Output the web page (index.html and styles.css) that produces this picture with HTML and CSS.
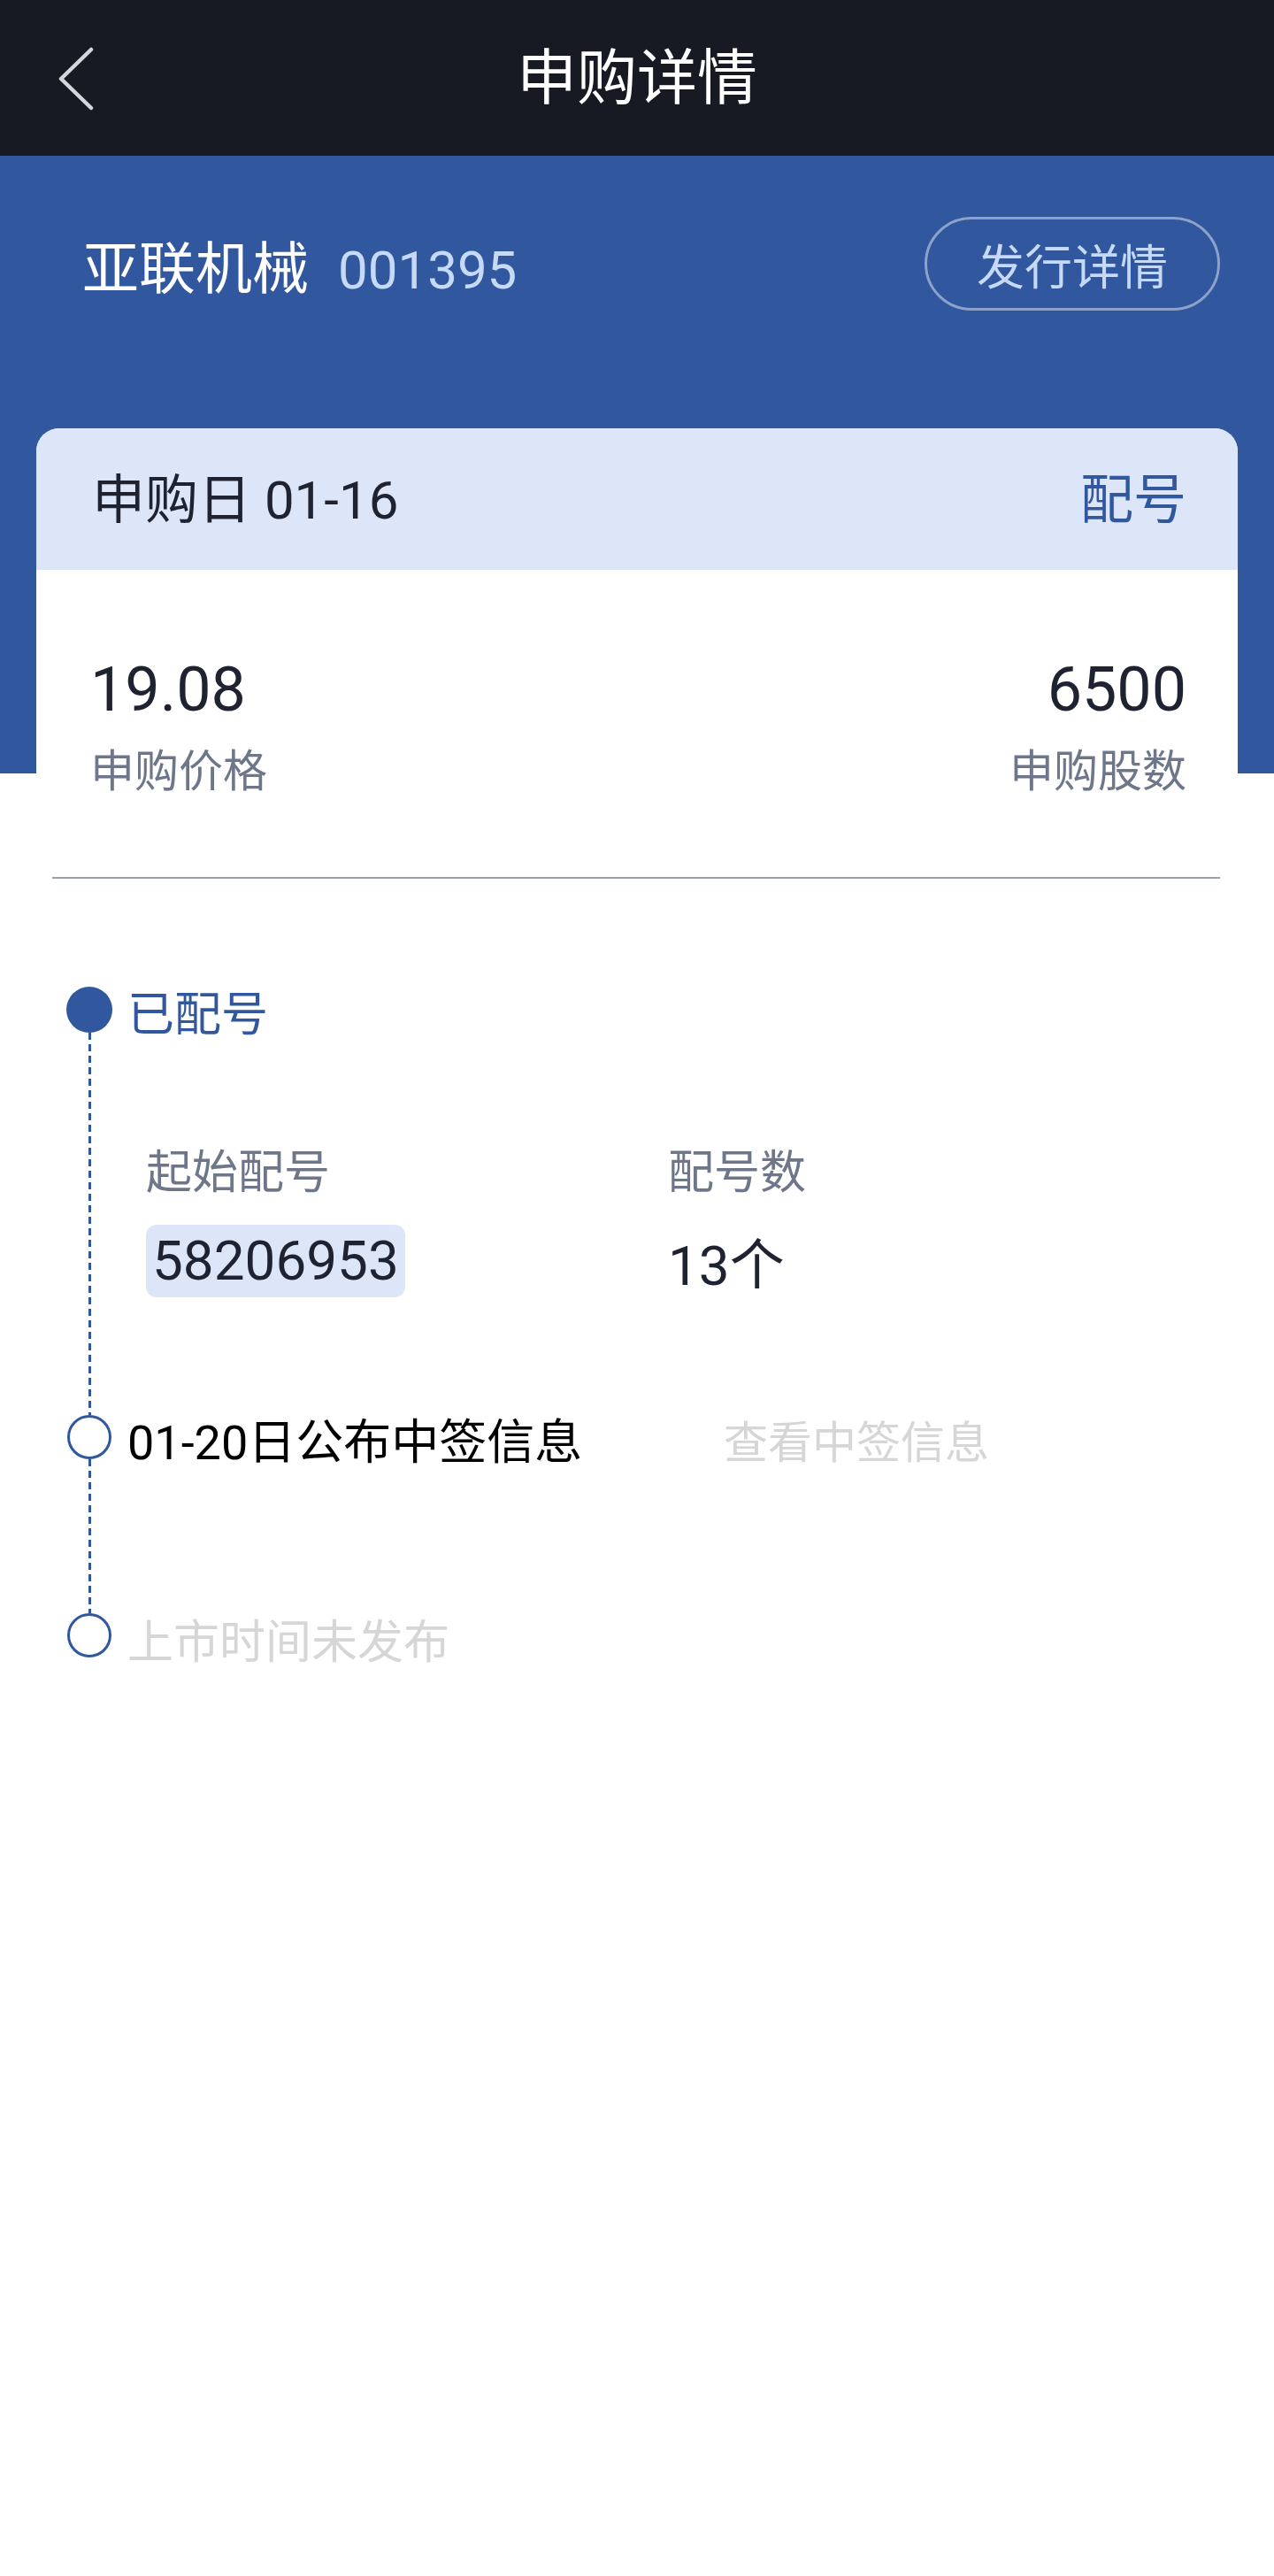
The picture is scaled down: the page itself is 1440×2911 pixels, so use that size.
FILE: index.html
```html
<!DOCTYPE html>
<html lang="zh-CN">
<head>
  <meta charset="UTF-8">
  <title>申购详情</title>
  <link rel="stylesheet" href="styles.css">
</head>
<body>

<!-- Top nav -->
<div class="nav">
  <div class="nav-back">
    <svg width="44" height="72" viewBox="0 0 44 72"><polyline points="40,3 6,36 40,69" fill="none" stroke="#d4d6dc" stroke-width="4.5" stroke-linecap="round" stroke-linejoin="round"/></svg>
  </div>
  <div class="nav-title">申购详情</div>
  <div></div>
</div>

<!-- Blue band with stock + card -->
<div class="hero">
  <div class="stock-row">
    <div class="stock">
      <span class="stock-name">亚联机械</span>
      <span class="stock-code">001395</span>
    </div>
    <button class="issue-btn">发行详情</button>
  </div>

  <div class="card">
    <div class="card-head">
      <span class="card-date">申购日 01-16</span>
      <span class="card-status">配号</span>
    </div>
    <div class="card-body">
      <div class="stat">
        <div class="stat-value">19.08</div>
        <div class="stat-label">申购价格</div>
      </div>
      <div class="stat stat-right">
        <div class="stat-value">6500</div>
        <div class="stat-label">申购股数</div>
      </div>
    </div>
  </div>
</div>

<div class="divider"></div>

<!-- Timeline -->
<div class="timeline">
  <div class="tl-item tl-first">
    <div class="tl-marker">
      <div class="dot dot-filled"></div>
      <div class="dash"></div>
    </div>
    <div class="tl-content">
      <div class="tl-title active">已配号</div>
      <div class="alloc">
        <div class="alloc-col">
          <div class="alloc-label">起始配号</div>
          <div class="alloc-value"><span class="num-box">58206953</span></div>
        </div>
        <div class="alloc-col">
          <div class="alloc-label">配号数</div>
          <div class="alloc-value">13个</div>
        </div>
      </div>
    </div>
  </div>

  <div class="tl-item tl-second">
    <div class="tl-marker">
      <div class="dot"></div>
      <div class="dash"></div>
    </div>
    <div class="tl-content tl-row">
      <div class="tl-title">01-20日公布中签信息</div>
      <div class="tl-link">查看中签信息</div>
    </div>
  </div>

  <div class="tl-item tl-last">
    <div class="tl-marker">
      <div class="dot"></div>
    </div>
    <div class="tl-content">
      <div class="tl-title muted">上市时间未发布</div>
    </div>
  </div>
</div>

</body>
</html>
```

FILE: styles.css
```css
* { box-sizing: border-box; }

body {
  margin: 0;
  background: #fff;
  font-family: Roboto, "Noto Sans CJK SC", sans-serif;
  color: #1f2230;
}

/* nav */
.nav {
  height: 176px;
  background: #171a23;
  display: grid;
  grid-template-columns: 1fr auto 1fr;
  align-items: center;
}

.nav-back {
  padding-left: 63px;
  padding-top: 2px;
  display: flex;
  align-items: center;
}

.nav-title {
  color: #fff;
  font-size: 68px;
  line-height: 80px;
  padding-top: 2px;
}

/* hero */
.hero {
  background: linear-gradient(to bottom, #31579f 0, #31579f 698px, #fff 698px);
}

.stock-row {
  display: flex;
  justify-content: space-between;
  align-items: center;
  padding: 69px 61px 133px 93px;
}

.stock {
  display: flex;
  align-items: baseline;
}

.stock-name {
  color: #fff;
  font-size: 64px;
}

.stock-code {
  color: #c6d9f7;
  font-size: 60px;
  margin-left: 33px;
}

.issue-btn {
  width: 334px;
  height: 106px;
  border: 3px solid rgba(255,255,255,0.45);
  border-radius: 53px;
  background: transparent;
  color: #c6d9f7;
  font-family: "Noto Sans CJK SC", sans-serif;
  font-size: 54px;
  padding: 0;
}

/* card */
.card {
  margin: 0 41px;
  border-radius: 26px 26px 0 0;
  overflow: hidden;
  background: #fff;
}

.card-head {
  height: 160px;
  background: #dce6f8;
  display: flex;
  justify-content: space-between;
  align-items: center;
  padding: 0 58px 10px 63px;
  font-size: 60px;
}

.card-date { color: #1f2230; }

.card-status { color: #31579f; }

.card-body {
  display: flex;
  justify-content: space-between;
  padding: 95px 58px 89px 61px;
}

.stat {
  display: flex;
  flex-direction: column;
}

.stat-right { align-items: flex-end; }

.stat-value {
  font-size: 70px;
  line-height: 80px;
  color: #1f2230;
}

.stat-label {
  margin-top: 23px;
  font-size: 50px;
  line-height: 60px;
  color: #6e7689;
}

.divider {
  height: 2px;
  margin: 0 61px 0 59px;
  background: #9ba1a8;
}

/* timeline */
.timeline {
  padding: 122px 0 0 75px;
}

.tl-item {
  display: grid;
  grid-template-columns: 52px 1fr;
  column-gap: 17px;
}

.tl-first { height: 484px; }

.tl-second { height: 224px; }

.tl-marker {
  display: flex;
  flex-direction: column;
  align-items: center;
}

.dot {
  width: 50px;
  height: 50px;
  flex: none;
  border-radius: 50%;
  border: 3px solid #31579f;
  background: #fff;
}

.dot-filled {
  width: 52px;
  height: 52px;
  background: #31579f;
  border: none;
}

.dash {
  flex: 1;
  width: 3px;
  background: repeating-linear-gradient(to bottom, #31579f 0, #31579f 8px, transparent 8px, transparent 13px);
}

.tl-title {
  font-size: 54px;
  line-height: 60px;
  color: #000;
  padding-top: 2px;
}

.tl-title.active {
  color: #31579f;
  font-size: 53px;
  line-height: 64px;
  padding-top: 0;
}

.tl-title.muted {
  color: #d6d6d6;
  font-size: 52px;
  padding-top: 4px;
}

.tl-row {
  display: grid;
  grid-template-columns: 674px auto;
  align-items: start;
}

.tl-link {
  font-size: 50px;
  line-height: 60px;
  color: #d6d6d6;
  padding-top: 2px;
}

.alloc {
  display: grid;
  grid-template-columns: 590px auto;
  padding: 117px 0 0 21px;
}

.alloc-label {
  font-size: 52px;
  line-height: 60px;
  color: #6e7689;
}

.alloc-value {
  margin-top: 28px;
  height: 82px;
  display: flex;
  align-items: center;
  font-size: 62px;
  color: #1f2230;
}

.num-box {
  background: #dce6f8;
  border-radius: 12px;
  height: 82px;
  line-height: 82px;
  padding: 0 7px;
}
```
